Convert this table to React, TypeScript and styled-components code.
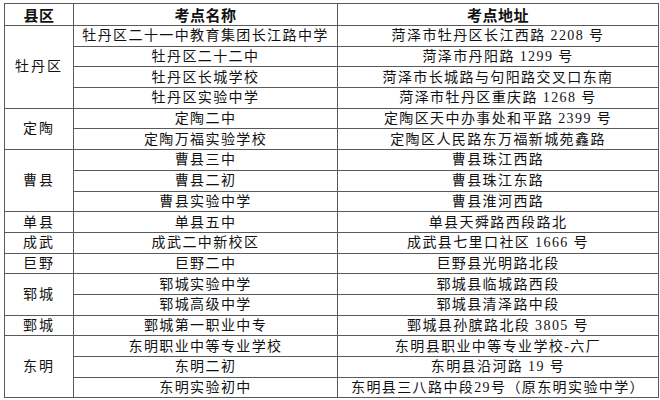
import React from 'react';
import styled, { createGlobalStyle } from 'styled-components';

const GlobalStyle = createGlobalStyle`
  html, body {
    margin: 0;
    padding: 0;
    background: #ffffff;
  }
`;

const Page = styled.div`
  width: 660px;
  height: 400px;
  padding: 3px 5px 3px 4px;
  box-sizing: border-box;
  background: #fff;
  overflow: hidden;
`;

const Table = styled.table`
  width: 651px;
  height: 394px;
  border-collapse: collapse;
  table-layout: fixed;
  color: #111;
  font-family: 'Liberation Serif', 'Noto Sans CJK SC', serif;
  font-size: 14px;
`;

const Row = styled.tr`
  height: 20.7px;
`;

const HeadCell = styled.th<{ $w: number }>`
  width: ${({ $w }) => $w}px;
  border: 1px solid #5a5a5a;
  font-family: 'Noto Sans CJK SC', sans-serif;
  font-weight: 700;
  font-size: 15px;
  padding: 0;
  text-align: center;
  letter-spacing: 0.5px;
`;

const Cell = styled.td<{ $district?: boolean }>`
  border: 1px solid #5a5a5a;
  padding: 0;
  text-align: center;
  white-space: nowrap;
  letter-spacing: ${({ $district }) => ($district ? '2px' : '1.4px')};
`;

const Text = styled.span`
  display: block;
  height: 15px;
  line-height: 15px;
  overflow: visible;
`;

type Group = { district: string; sites: [string, string][] };

const groups: Group[] = [
  {
    district: '牡丹区',
    sites: [
      ['牡丹区二十一中教育集团长江路中学', '菏泽市牡丹区长江西路 2208 号'],
      ['牡丹区二十二中', '菏泽市丹阳路 1299 号'],
      ['牡丹区长城学校', '菏泽市长城路与句阳路交叉口东南'],
      ['牡丹区实验中学', '菏泽市牡丹区重庆路 1268 号'],
    ],
  },
  {
    district: '定陶',
    sites: [
      ['定陶二中', '定陶区天中办事处和平路 2399 号'],
      ['定陶万福实验学校', '定陶区人民路东万福新城苑鑫路'],
    ],
  },
  {
    district: '曹县',
    sites: [
      ['曹县三中', '曹县珠江西路'],
      ['曹县二初', '曹县珠江东路'],
      ['曹县实验中学', '曹县淮河西路'],
    ],
  },
  { district: '单县', sites: [['单县五中', '单县天舜路西段路北']] },
  { district: '成武', sites: [['成武二中新校区', '成武县七里口社区 1666 号']] },
  { district: '巨野', sites: [['巨野二中', '巨野县光明路北段']] },
  {
    district: '郓城',
    sites: [
      ['郓城实验中学', '郓城县临城路西段'],
      ['郓城高级中学', '郓城县清泽路中段'],
    ],
  },
  { district: '鄄城', sites: [['鄄城第一职业中专', '鄄城县孙膑路北段 3805 号']] },
  {
    district: '东明',
    sites: [
      ['东明职业中等专业学校', '东明县职业中等专业学校-六厂'],
      ['东明二初', '东明县沿河路 19 号'],
      ['东明实验初中', '东明县三八路中段29号（原东明实验中学）'],
    ],
  },
];

export default function App() {
  return (
    <Page>
      <GlobalStyle />
      <Table>
        <thead>
          <Row>
            <HeadCell $w={68}>县区</HeadCell>
            <HeadCell $w={263}>考点名称</HeadCell>
            <HeadCell $w={320}>考点地址</HeadCell>
          </Row>
        </thead>
        <tbody>
          {groups.map((g) =>
            g.sites.map(([name, addr], i) => (
              <Row key={g.district + i}>
                {i === 0 && (
                  <Cell $district rowSpan={g.sites.length}>
                    <Text>{g.district}</Text>
                  </Cell>
                )}
                <Cell>
                  <Text>{name}</Text>
                </Cell>
                <Cell>
                  <Text>{addr}</Text>
                </Cell>
              </Row>
            ))
          )}
        </tbody>
      </Table>
    </Page>
  );
}
